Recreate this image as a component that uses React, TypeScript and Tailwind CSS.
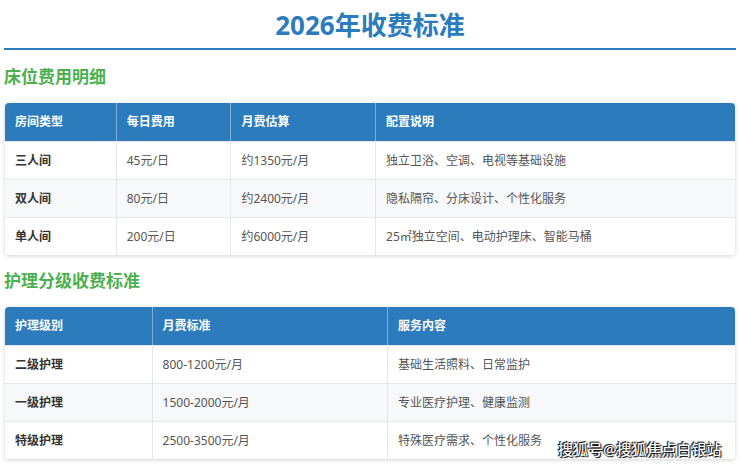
const font = "font-['Noto_Sans','Noto_Sans_CJK_SC',sans-serif]";

type Table = { cols: number[]; head: string[]; rows: string[][] };

const bedTable: Table = {
  cols: [111, 115, 145, 361],
  head: ["房间类型", "每日费用", "月费估算", "配置说明"],
  rows: [
    ["三人间", "45元/日", "约1350元/月", "独立卫浴、空调、电视等基础设施"],
    ["双人间", "80元/日", "约2400元/月", "隐私隔帘、分床设计、个性化服务"],
    ["单人间", "200元/日", "约6000元/月", "25㎡独立空间、电动护理床、智能马桶"],
  ],
};

const careTable: Table = {
  cols: [147, 236, 349],
  head: ["护理级别", "月费标准", "服务内容"],
  rows: [
    ["二级护理", "800-1200元/月", "基础生活照料、日常监护"],
    ["一级护理", "1500-2000元/月", "专业医疗护理、健康监测"],
    ["特级护理", "2500-3500元/月", "特殊医疗需求、个性化服务"],
  ],
};

function FeeTable({ t }: { t: Table }) {
  return (
    <div className="mx-[5px] overflow-hidden rounded-[4px] bg-white shadow-[0_1px_4px_rgba(0,0,0,0.18)]">
      <div className="flex h-[38px] bg-[#2c7bbd] text-[12px] font-bold text-white">
        {t.head.map((h, i) => (
          <div
            key={h}
            className={`flex items-center pl-[10px] ${i > 0 ? "border-l border-[#7fb0d8]" : ""}`}
            style={{ width: t.cols[i] }}
          >
            {h}
          </div>
        ))}
      </div>
      {t.rows.map((r, ri) => (
        <div
          key={ri}
          className={`flex h-[38px] border-t border-[#e3e6ea] text-[12px] text-[#555] ${ri === 1 ? "bg-[#f6f8fa]" : "bg-white"}`}
        >
          {r.map((c, i) => (
            <div
              key={i}
              className={`flex items-center pl-[10px] ${i > 0 ? "border-l border-[#e3e6ea]" : "font-semibold text-[#333]"}`}
              style={{ width: t.cols[i] }}
            >
              {c}
            </div>
          ))}
        </div>
      ))}
    </div>
  );
}

export default function App() {
  return (
    <div className={`relative h-[467px] w-[740px] overflow-hidden bg-white ${font}`}>
      <h1 className="pt-[7px] text-center text-[26px] font-bold leading-[36px] text-[#2c7bbd]">
        2026年收费标准
      </h1>
      <div className="mx-[4px] mt-[5px] h-[2px] bg-[#2c7bbd]" />
      <h2 className="mt-[15px] pl-[4px] text-[17px] font-bold leading-[24px] text-[#4cb04f]">
        床位费用明细
      </h2>
      <div className="mt-[14px]">
        <FeeTable t={bedTable} />
      </div>
      <h2 className="mt-[14px] pl-[4px] text-[17px] font-bold leading-[24px] text-[#4cb04f]">
        护理分级收费标准
      </h2>
      <div className="mt-[14px]">
        <FeeTable t={careTable} />
      </div>
      <div className="absolute left-[558px] top-[438px] whitespace-nowrap text-[15px] font-medium leading-[22px] text-white [text-shadow:0_0_1px_#000,1px_1px_1px_#000,-1px_-1px_1px_#000]">
        搜狐号@搜狐焦点白银站
      </div>
    </div>
  );
}
